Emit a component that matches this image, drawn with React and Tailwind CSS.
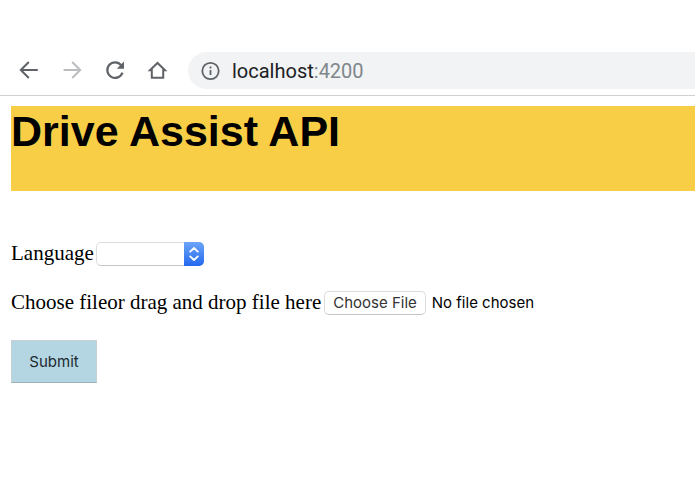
import { useState } from 'react';

const BrowserBar = () => {
  return (
    <header className="flex items-center gap-[18px] border-b border-[#cfd0d2] pt-13 pb-1.5 pl-4">
      <button type="button" aria-label="Back" className="text-[#5f6368]">
        <svg className="size-[25px]" viewBox="0 1 25 25" fill="none" stroke="currentColor" strokeWidth="2">
          <path d="M21.8 13H5.2M12.8 5L4.8 13l8 8" />
        </svg>
      </button>
      <button type="button" aria-label="Forward" disabled className="text-[#bbbdbf]">
        <svg className="size-[25px]" viewBox="0 1 25 25" fill="none" stroke="currentColor" strokeWidth="2">
          <path d="M4.6 13h16.6M13.2 5l8 8-8 8" />
        </svg>
      </button>
      <button type="button" aria-label="Reload" className="text-[#5f6368]">
        <svg className="size-[25px]" viewBox="0 1 25 25" fill="none" stroke="currentColor" strokeWidth="2.2">
          <path d="M19.2 8.2A7.8 7.8 0 1 0 20.5 15.6" />
          <path d="M22 4.5v7.2h-7.2z" fill="currentColor" stroke="none" />
        </svg>
      </button>
      <button type="button" aria-label="Home" className="text-[#5f6368]">
        <svg className="size-[25px]" viewBox="0 1 25 25" fill="none" stroke="currentColor" strokeWidth="2">
          <path d="M5 13.2H6.8V20.8H18.2V13.2H20L12.5 6z" />
        </svg>
      </button>
      <div className="flex h-[37px] flex-1 items-center gap-3 rounded-l-full bg-[#f1f3f4] pl-3 font-[Roboto,sans-serif] text-xl text-[#5f6368]">
        <svg className="size-5 shrink-0" viewBox="0 0 20 20" fill="none" stroke="currentColor" strokeWidth="1.8">
          <circle cx="10.5" cy="10" r="8.2" />
          <path d="M10.5 9v5M10.5 5.6v2" />
        </svg>
        <span className="text-[#202124]">
          localhost<span className="text-[#80868b]">:4200</span>
        </span>
      </div>
    </header>
  );
};

const App = () => {
  const [language, setLanguage] = useState('');

  const handleSubmit = (e) => {
    e.preventDefault();
  };

  return (
    <div className="min-h-screen bg-white text-black">
      <BrowserBar />

      <main className="pt-2.5 pl-[11px]">
        <div className="h-[85px] bg-[#f7ce46]">
          <h1 className="font-['Liberation_Sans',sans-serif] text-[43px] leading-[50px] font-bold">
            Drive Assist API
          </h1>
        </div>

        <form
          onSubmit={handleSubmit}
          className="flex flex-col items-start gap-[25px] pt-[51px] font-['Liberation_Serif',serif] text-[21px] leading-[22px]"
        >
          <div className="flex items-start gap-0.5">
            <label htmlFor="language">Language</label>
            <div className="relative">
              <select
                id="language"
                value={language}
                onChange={(e) => setLanguage(e.target.value)}
                className="block h-6 w-[108px] appearance-none rounded-[5px] border border-[#dcdcdc] border-b-[#c4c4c4] bg-white px-2 font-[Inter,sans-serif] text-[15px]"
              >
                <option value=""></option>
                <option value="en">English</option>
                <option value="de">German</option>
              </select>
              <span className="pointer-events-none absolute inset-y-0 right-0 flex w-5 items-center justify-center rounded-r-[5px] bg-linear-to-b from-[#6ca5f8] to-[#2367ee] text-white">
                <svg className="h-4 w-3" viewBox="0 0 12 16" fill="none" stroke="currentColor" strokeWidth="1.8" strokeLinecap="round" strokeLinejoin="round">
                  <path d="M2.2 5.6L6 2l3.8 3.6M2.2 10.4L6 14l3.8-3.6" />
                </svg>
              </span>
            </div>
          </div>

          <div className="flex items-start gap-[3px]">
            <label htmlFor="file">Choose fileor drag and drop file here</label>
            <input
              id="file"
              type="file"
              className="font-[Inter,sans-serif] text-[15px] leading-6 file:mr-1.5 file:h-6 file:rounded-[5px] file:border file:border-solid file:border-[#dcdcdc] file:border-b-[#c4c4c4] file:bg-white file:px-2 file:leading-[22px] file:text-[#333333]"
            />
          </div>

          <button
            type="submit"
            className="h-[43px] w-[86px] border border-[#c6d0d4] border-b-[#9fb0b7] bg-[#b4d6e2] font-[Inter,sans-serif] text-[15px] text-[#1c2a30]"
          >
            Submit
          </button>
        </form>
      </main>
    </div>
  );
};

export default App;
